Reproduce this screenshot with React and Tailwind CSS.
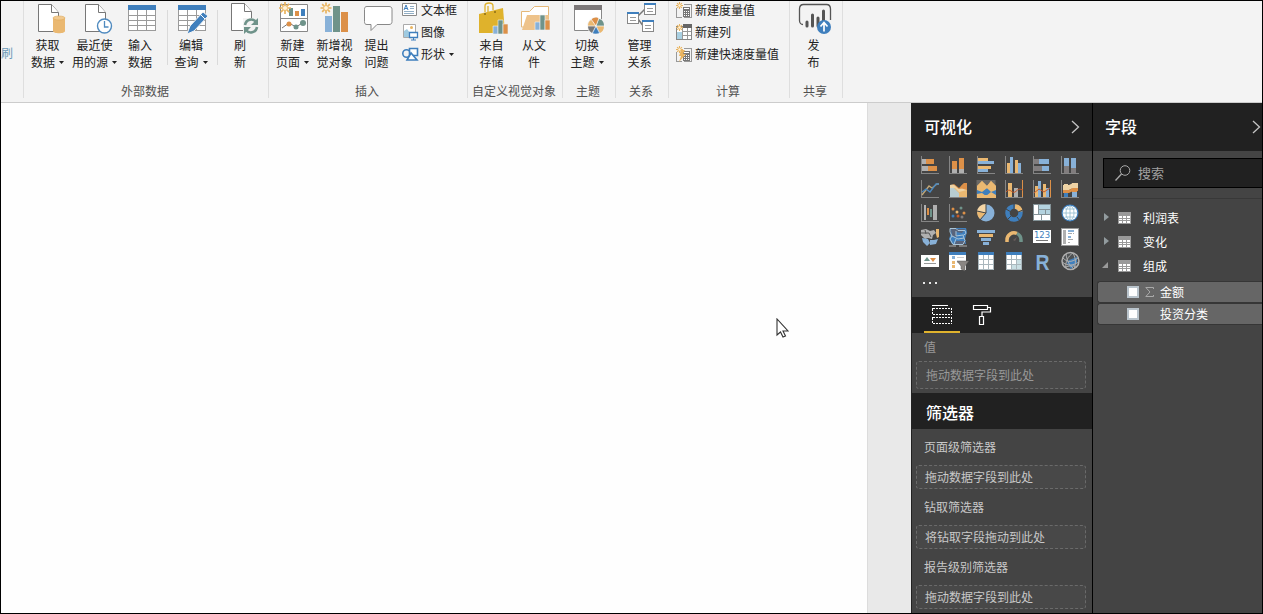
import React from "react";

const Art = ({ x, y, w, h, children }) => (
  <svg className="block shrink-0" width={w} height={h} viewBox={`${x} ${y} ${w} ${h}`} fill="none">
    {children}
  </svg>
);

const Caret = () => (
  <svg className="mb-[2px] ml-1 inline-block align-middle" width="5" height="3" viewBox="0 0 5 3">
    <path d="M0 0h5L2.5 3z" fill="#222" />
  </svg>
);

const Button = ({ x, w, lines, caret, children }) => (
  <div className="flex shrink-0 flex-col items-center">
    <Art x={x} y={1} w={w} h={36}>{children}</Art>
    <div className="-mt-px pr-[2px] text-center leading-[17px] whitespace-nowrap">
      <div>{lines[0]}</div>
      <div>{lines[1]}{caret && <Caret />}</div>
    </div>
  </div>
);

const Small = ({ x, y, text, caret, children }) => (
  <div className="flex h-[22px] shrink-0 items-center whitespace-nowrap">
    <Art x={x} y={y} w={18} h={22}>{children}</Art>
    <span className="pb-px pl-px leading-[18px]">{text}{caret && <Caret />}</span>
  </div>
);

const Group = ({ className, label, children }) => (
  <div className={"flex h-[97px] shrink-0 flex-col border-r border-[#dedede] " + className}>
    <div className="flex h-[81px] shrink-0 items-start overflow-hidden">{children}</div>
    <div className="pr-[2px] text-center leading-[18px] whitespace-nowrap text-[#505050]">{label}</div>
  </div>
);

const Spark = ({ x, y, r = 6 }) => (
  <g stroke="#e9b45f" strokeWidth={r > 5 ? 1.7 : 1.1}>
    <path d={`M${x - r} ${y}h${2 * r}M${x} ${y - r}v${2 * r}M${x - r * 0.7} ${y - r * 0.7}l${r * 1.4} ${r * 1.4}M${x - r * 0.7} ${y + r * 0.7}l${r * 1.4} ${-r * 1.4}`} />
    <circle cx={x} cy={y} r={r * 0.35} fill="#fff3dc" stroke="none" />
  </g>
);

const Page = ({ x, y = 4.5 }) => (
  <g stroke="#777" fill="#fff">
    <path d={`M${x} ${y}h13l7 8v19h-20z`} />
    <path d={`M${x + 13} ${y}v8h7`} />
  </g>
);

const Sheet = ({ x }) => (
  <g shapeRendering="crispEdges">
    <rect x={x} y="5" width="28" height="25" fill="#fff" />
    <path d={`M${x + .5} 10v20h27v-20M${x} 15.5h28M${x} 20.5h28M${x} 25.5h28M${x + 9.5} 10v20M${x + 18.5} 10v20`} stroke="#9a9a9a" />
    <rect x={x} y="5" width="28" height="5" fill="#3f7fbd" />
  </g>
);

const Calc = ({ y }) => (
  <g shapeRendering="crispEdges">
    <path d={`M676.5 ${y + 7}v9.5h5M684 ${y + 3.5}h7.500v13h-8`} stroke="#999" />
    <rect x="683" y={y + 6} width="7" height="10" fill="#777" />
    <path d={`M684 ${y + 7.5}h5M684 ${y + 10.5}h1M686 ${y + 10.5}h1M688 ${y + 10.5}h1M684 ${y + 12.5}h1M686 ${y + 12.5}h1M688 ${y + 12.5}h1M684 ${y + 14.5}h1M686 ${y + 14.5}h1M688 ${y + 14.5}h1`} stroke="#fff" />
  </g>
);

const Ribbon = () => (
  <div className="flex h-[102px] shrink-0 overflow-hidden border-b border-[#cccccc] bg-[#f3f3f3] text-[12px] text-[#222]">
    <div className="h-[97px] w-[23px] shrink-0 border-r border-[#dedede] pt-[43px] leading-[18px] text-[#6b99b7]">刷</div>
    <Group className="w-[245px]" label="外部数据">
      <div className="flex pl-px">
        <Button x={25} w={47} lines={["获取", "数据"]} caret>
          <Page x={38.5} />
          <path d="M53 18v13c0 3 12 3 12 0V18z" fill="#eab871" />
          <ellipse cx="59" cy="18" rx="6" ry="2" fill="#f1c98f" stroke="#dda758" strokeWidth=".6" />
        </Button>
        <Button x={72} w={46} lines={["最近使", "用的源"]} caret>
          <Page x={84.5} />
          <circle cx="103.500" cy="26" r="7" fill="#fff" stroke="#4f8abf" strokeWidth="1.400" />
          <path d="M103.500 21v6h4" stroke="#4f8abf" strokeWidth="1.300" />
        </Button>
        <Button x={118} w={44} lines={["输入", "数据"]}><Sheet x={127} /></Button>
        <div className="mt-[9px] mr-px ml-1 h-[55px] w-px bg-[#dadada]" />
        <Button x={168} w={46} lines={["编辑", "查询"]} caret>
          <Sheet x={177} />
          <path d="M186 34l3-8 13-14 5 4-14 15z" fill="#3f7fbd" stroke="#f3f3f3" />
          <path d="M199 14l5 5" stroke="#fff" />
        </Button>
        <div className="mt-[9px] mr-px ml-[2px] h-[55px] w-px bg-[#dadada]" />
        <Button x={218} w={44} lines={["刷", "新"]}>
          <Page x={230.5} y={3.5} />
          <rect x="242" y="18" width="16" height="16" fill="#f3f3f3" />
          <path d="M244 25c1-6 8-7 11-3M256 27c-1 6-8 7-11 3" stroke="#6f938a" strokeWidth="2.600" />
          <path d="M257 18v7h-7zM243 34v-7h7z" fill="#6f938a" />
        </Button>
      </div>
    </Group>
    <Group className="w-[199px]" label="插入">
      <div className="flex pl-[3px]">
        <Button x={272} w={43} lines={["新建", "页面"]} caret>
          <path d="M280.500 4.500h27v27h-27zM280 18.500h28" fill="#fff" stroke="#888" />
          <g shapeRendering="crispEdges"><rect x="289" y="8" width="4" height="8" fill="#6f938a" /><rect x="295" y="11" width="4" height="5" fill="#dc9048" /><rect x="301" y="9" width="4" height="7" fill="#3f7fbd" /></g>
          <path d="M282 28l7-5 7 4 8-5" stroke="#777" />
          <circle cx="289" cy="24" r="2.500" fill="#dc9048" /><circle cx="296" cy="27" r="2.500" fill="#6f938a" /><circle cx="303" cy="23" r="3" fill="#6f938a" />
          <Spark x={285} y={8} />
        </Button>
        <Button x={315} w={41} lines={["新增视", "觉对象"]}>
          <path d="M325 16h7v16h-7z" fill="#88b1d8" /><path d="M333 6h7v26h-7z" fill="#6f938a" /><path d="M341 12h7v20h-7z" fill="#dc9048" />
          <Spark x={326} y={8} r={5.500} />
        </Button>
        <Button x={356} w={43} lines={["提出", "问题"]}>
          <path d="M367 6.500h22c2 0 3 1 3 3v12c0 2-1 3-3 3h-12l-6 6v-6h-4c-2 0-2.500-1-2.500-3v-12c0-2 .5-3 2.500-3z" fill="#fff" stroke="#888" />
        </Button>
        <div className="-mt-[2px] flex flex-col pl-[3px]">
          <Small x={402} y={-1} text="文本框">
            <path d="M402.500 3.500h14v12h-14z" fill="#fff" stroke="#8a8a8a" />
            <path d="M404 10l2-5 2 5M404.800 8.500h2.500" stroke="#3f7fbd" /><path d="M410 6.500h4M410 8.500h4M404 11.500h10M404 13.500h10" stroke="#91aec5" />
          </Small>
          <Small x={402} y={21} text="图像">
            <path d="M403.500 24.500h12v13h-12z" fill="#fff" stroke="#aaa" />
            <path d="M404 37v-6l3-2 3 4v4z" fill="#9fcae0" /><circle cx="411.500" cy="27.500" r="1.500" fill="#e9b45f" />
            <path d="M409.500 32.500h8v5h-8z" fill="#fff" stroke="#3f7fbd" strokeWidth="1.300" /><path d="M413.500 38v2M411 40h5" stroke="#3f7fbd" />
          </Small>
          <Small x={402} y={43} text="形状" caret>
            <circle cx="406.500" cy="53.500" r="3.700" stroke="#3f7fbd" strokeWidth="1.600" />
            <path d="M409.500 48.500h8v7h-8z" fill="#fff" stroke="#3f7fbd" strokeWidth="1.600" /><path d="M407 60l4-7 6 7z" fill="#fff" stroke="#3f7fbd" strokeWidth="1.600" />
          </Small>
        </div>
      </div>
    </Group>
    <Group className="w-[95px]" label="自定义视觉对象">
      <div className="flex pl-[3px]">
        <Button x={471} w={43} lines={["来自", "存储"]}>
          <path d="M485 12V6c0-4 8-4 8 0v4M488 12V6" stroke="#dfb22c" strokeWidth="1.300" />
          <path d="M479 14l24-6 2 25h-26z" fill="#dfb22c" />
          <circle cx="485" cy="14" r="1" fill="#8b6d16" /><circle cx="495" cy="12" r="1" fill="#8b6d16" />
          <path d="M493 26h5v8h-5z" fill="#88b1d8" stroke="#f3f3f3" strokeWidth=".6" /><path d="M498 20h5v14h-5z" fill="#6f938a" stroke="#f3f3f3" strokeWidth=".6" /><path d="M503 24h5v10h-5z" fill="#dc9048" stroke="#f3f3f3" strokeWidth=".6" />
        </Button>
        <Button x={514} w={42} lines={["从文", "件"]}>
          <path d="M521.500 27V11.500h8l5-5h14V27z" fill="#fff" stroke="#e5b879" />
          <path d="M522 30l5-15h22l-2 15z" fill="#eec38b" />
          <path d="M535 22h5v8h-5z" fill="#88b1d8" stroke="#f3f3f3" strokeWidth=".6" /><path d="M540 15h5v15h-5z" fill="#6f938a" stroke="#f3f3f3" strokeWidth=".6" /><path d="M545 20h5v10h-5z" fill="#dc9048" stroke="#f3f3f3" strokeWidth=".6" />
        </Button>
      </div>
    </Group>
    <Group className="w-[53px]" label="主题">
      <Button x={563} w={50} lines={["切换", "主题"]} caret>
        <path d="M574.500 5.500h27v25h-27z" fill="#fff" stroke="#888" /><path d="M574 5h28v5h-28z" fill="#7c7879" />
        <circle cx="596" cy="26" r="9" fill="#f3f3f3" />
        <path d="M596 26l-5-6c3-3 6-3 8-1z" fill="#dc9048" /><path d="M596 26l3-7c4 1 5 4 5 7z" fill="#6f938a" /><path d="M596 26h8c0 4-2 6-4 7z" fill="#eab871" /><path d="M596 26l4 7c-3 1-6 1-8 0z" fill="#3f7fbd" /><path d="M596 26l-4 7c-3-2-4-4-4-7z" fill="#777" /><path d="M596 26h-8c0-3 1-5 3-6z" fill="#eab871" />
        <path d="M596 26l-5-7M596 26l3-8M596 26h9M596 26l4 8M596 26l-4 8M596 26h-9" stroke="#fff" strokeWidth=".7" />
      </Button>
    </Group>
    <Group className="w-[53px]" label="关系">
      <Button x={616} w={49} lines={["管理", "关系"]}>
        <path d="M638 16l8-8M638 19l6 8" stroke="#777" strokeWidth="1.500" />
        {[[627, 12], [644, 3], [642, 20]].map(([a, b]) => (
          <g key={a} shapeRendering="crispEdges"><path d={`M${a + .5} ${b + .5}h11v11h-11z`} fill="#fff" stroke="#888" /><path d={`M${a} ${b}h12v2h-12z`} fill="#3f7fbd" /><path d={`M${a + 3} ${b + 5.5}h6M${a + 3} ${b + 8.5}h6`} stroke="#999" /></g>
        ))}
      </Button>
    </Group>
    <Group className="w-[121px]" label="计算">
      <div className="-mt-[2px] flex flex-col pl-[7px]">
        <Small x={676} y={-1} text="新建度量值"><Calc y={1} /><Spark x={679.500} y={5.500} r={3.500} /></Small>
        <Small x={676} y={21} text="新建列">
          <g shapeRendering="crispEdges"><path d="M676.500 26.500h15v13h-15z" fill="#fff" stroke="#888" /><path d="M677 32h5v7h-5z" fill="#a9d0e2" /><path d="M683 24h9v4h-9z" fill="#666" /><path d="M682.500 28v11M687.500 28v11M682 31.500h9M682 35.500h9" stroke="#999" /></g>
          <Spark x={679.500} y={27.500} r={3.500} />
        </Small>
        <Small x={676} y={43} text="新建快速度量值"><Calc y={45} /><path d="M681 50l4 0-2 4h3l-7 8 2-6h-2z" fill="#e9b45f" /><Spark x={679.500} y={49.500} r={3.500} /></Small>
      </div>
    </Group>
    <Group className="w-[53px]" label="共享">
      <Button x={790} w={49} lines={["发", "布"]}>
        <path d="M803 24.500c-2 0-3.500-2-3.500-4V9c0-3 1-4.500 4-4.500h23c3 0 4 1.500 4 4.500v11" fill="none" stroke="#555" strokeWidth="1.300" />
        <path d="M807 22v4M812.500 15v11M818 18v8M823.500 11v10" stroke="#555" strokeWidth="3" strokeLinecap="round" />
        <circle cx="824" cy="27" r="7" fill="#3f7fbd" /><path d="M824 31.500V23M820.500 26.500l3.500-4 3.500 4" stroke="#fff" strokeWidth="1.700" />
      </Button>
    </Group>
  </div>
);

const O = "#dc9048", Y = "#eab871", B = "#88b1d8", D = "#3f7fbd", G = "#b0b0b0", S = "#817d7e", T = "#6f938a";
const Bars = ({ list, axis = true }) => (
  <g shapeRendering="crispEdges">
    {list.map(([c, x, y, w, h], i) => <rect key={i} x={x} y={y} width={w} height={h} fill={c} />)}
    {axis && <path d="M.5 0v17.500H18" stroke="#858585" />}
  </g>
);
const Axis = () => <path d="M.5 0v17.500H18" stroke="#858585" shapeRendering="crispEdges" />;
const Grid = ({ tint }) => (
  <g shapeRendering="crispEdges">
    <path d="M1 1h16v17H1z" fill="#fff" />{tint && <path d="M12 8h5v9h-5zM7 13h5v4H7z" fill="#c9dfe4" />}
    <path d="M1.500 3v14.500h15V3M1 7.500h16M1 12.500h16M6.500 3v14M11.500 3v14" stroke="#aab7bd" /><path d="M1 0h16v3H1z" fill={D} />
  </g>
);

const charts = [
  <Bars list={[[G, 1, 3, 4, 5], [O, 5, 3, 8, 5], [G, 1, 10, 6, 5], [O, 7, 10, 9, 5]]} />,
  <Bars list={[[O, 3, 5, 5, 8], [G, 3, 13, 5, 4], [O, 10, 2, 5, 11], [G, 10, 13, 5, 4]]} />,
  <Bars list={[[Y, 1, 2, 10, 3], [B, 1, 5, 16, 3], [Y, 1, 10, 13, 3], [B, 1, 13, 10, 3]]} />,
  <Bars list={[[Y, 2, 7, 3, 10], [B, 5, 1, 3, 16], [Y, 10, 4, 3, 13], [B, 13, 7, 3, 10]]} />,
  <Bars list={[[S, 1, 3, 5, 5], [B, 6, 3, 10, 5], [S, 1, 10, 8, 5], [B, 9, 10, 7, 5]]} />,
  <Bars list={[[B, 3, 2, 5, 8], [S, 3, 10, 5, 7], [B, 10, 2, 5, 10], [S, 10, 12, 5, 5]]} />,
  <g><Axis /><path d="M1 15L8 6l3 2 5-4h2" stroke="#c2a878" strokeWidth="1.300" /><path d="M1 12l4-3 4 3 6-8h3" stroke="#4a88c0" strokeWidth="1.300" /></g>,
  <g><path d="M1 17V6l4-2 5 4 5-5h3v14z" fill={O} /><path d="M1 17V5c4-2 6 2 9 4 3 0 5-3 8-3v11z" fill="#eed3a5" /><path d="M1 17V9l5-1 4 4 8-2v7z" fill={Y} /><path d="M1 17V8l4 0 5 5v4z" fill="#afd0e2" opacity=".85" /><path d="M11 8c2-4 4-5 7-5v7z" fill={O} /><path d="M0 17.500h18" stroke="#858585" /></g>,
  <g><path d="M-.5 0v18h19V0" fill="#6a6865" /><path d="M0 18V6l5-5 5 5 4-5 5 5v12z" fill={Y} /><path d="M0 15V9l5 2 5-3 4 3 5-3v7z" fill={D} /><path d="M0 10V6l5-5 5 5 4-5 5 5v4l-5 2-4-4-5 4z" fill={Y} /><path d="M0 18v-4l5-1 4 3 5-4 5 3v3z" fill={Y} /></g>,
  <g><Bars list={[[Y, 3, 3, 4, 14], [G, 9, 8, 4, 9], [O, 17, 0, 1, 17]]} /><path d="M1 12c4-5 6 2 9 0s3-4 8-2" stroke="#c65b29" /></g>,
  <g><Bars list={[[Y, 2, 6, 3, 11], [B, 5, 1, 3, 16], [Y, 10, 4, 3, 13], [B, 13, 8, 3, 9], [O, 17, 0, 1, 17]]} /><path d="M1 13l5-4 5 3 6-4" stroke="#c65b29" /></g>,
  <g><Bars list={[["#eed3a5", 3, 4, 4, 4], [Y, 3, 8, 4, 4], [D, 3, 13, 4, 4], ["#eed3a5", 11, 3, 5, 4], [O, 11, 8, 5, 4], [B, 11, 12, 5, 5]]} /><path d="M2 5h6l4-2h5v5h-5l-4 2H2z" fill="#eed3a5" /><path d="M2 10h6l4-2h5v3h-5l-4 2H2z" fill={O} /></g>,
  <Bars list={[[G, 3, 1, 2, 15], [O, 6, 4, 2, 7], [T, 9, 5, 2, 8], [G, 12, 1, 4, 15]]} />,
  <g><Axis />{[[4, 5, O], [12, 4, T], [8, 8, Y], [15, 9, O], [4, 12, D], [9, 12, "#c65b29"], [13, 13, S]].map(([x, y, c]) => <circle key={x + "-" + y} cx={x} cy={y} r="1.500" fill={c} />)}</g>,
  <g><circle cx="9" cy="9" r="8.500" fill={B} /><path d="M9 9V0C4 0 1 3 0 7z" fill="#f4d5a5" /><path d="M9 9L0 7c0 4 1 6 3 8z" fill={Y} /><path d="M9 0v9l-9-2M9 9l-6 7" stroke="#444" /></g>,
  <g><circle cx="9" cy="9" r="6.500" stroke={D} strokeWidth="4.500" /><path d="M10 2.500c3 .3 5 2 5.500 5" stroke={Y} strokeWidth="4.500" /><path d="M9 0v5M1 5l5 3M2 16l4-4M12 13l3 4M13 8l5-2" stroke="#444" /></g>,
  <g shapeRendering="crispEdges"><path d="M0 0h18v17H0z" fill="#fff" /><path d="M6 1h11v9H6z" fill="#b4d3df" /><path d="M.5 .5h17v16H.5zM5.500 1v9M0 10.500h18M8.500 10v7M12.500 5v5M6 5.500h11" stroke="#849398" /></g>,
  <g><circle cx="9" cy="9" r="8.500" fill={D} /><circle cx="9" cy="9" r="7.300" fill="#fff" /><path d="M9 2v14M2 9h14M4 5h10M4 13h10" stroke="#8fbace" strokeWidth=".8" /><ellipse cx="9" cy="9" rx="4" ry="7" stroke="#8fbace" strokeWidth=".8" /></g>,
  <g><path d="M0 2l5-1 4 2 4-1 2 3-3 2-1 4-4-1-3 1-4-4z" fill={G} /><path d="M15 1h3v8l-2 1-1-4z" fill={Y} /><path d="M1 10l6 1 2 4-3 3-4-4zM9 12l4 0 4-1-2 5-6 1z" fill={B} /><path d="M0 5h8l2 4M4 2l1 4" stroke="#555" /></g>,
  <g><path d="M1 0h16l1 4-2 7 1 5H3L0 11l2-6z" fill={D} /><path d="M2 1h14l-3 4-6-1 1 5-5-1zM7 13h9v3H6z" fill="#59647b" /><path d="M1 .5h6l2 2h7l1 3-3 2 2 5-2 4H4L1 11l2-3-2-4zM7 3v5l7-1M3 8l6 3 6-1M7 11l-2 5" stroke="#a9c4d7" /><path d="M0 18h7M10 18h8" stroke={G} /></g>,
  <Bars axis={false} list={[[B, 0, 2, 18, 3], [Y, 2, 6, 14, 3], [B, 4, 10, 10, 3], [B, 6, 14, 6, 3]]} />,
  <g><path d="M2 14v-2a7 7 0 0 1 10-6.500" stroke={Y} strokeWidth="3.500" /><path d="M12 5.500a7 7 0 0 1 4 6.500v2" stroke={T} strokeWidth="3.500" /><path d="M8 12l4-3-2 4z" fill="#695d5b" /></g>,
  <g><path d="M0 2h18v13H0z" fill="#fff" /><text x="9" y="10" textAnchor="middle" fill={D} fontSize="8.500" fontFamily="DejaVu Sans">123</text><path d="M3 12.500h12" stroke="#777" /></g>,
  <g shapeRendering="crispEdges"><path d="M.5 .5h17v17H.5z" fill="#fff" stroke="#999" /><path d="M2 2h3v14H2z" fill={G} /><path d="M7 2h6v2H7zM7 8h3v2H7z" fill={B} /><path d="M12 5h1M7 5.500h4M7 11.500h5M7 14.500h2" stroke="#aaa" /></g>,
  <g><path d="M0 3h18v12H0z" fill="#fff" /><path d="M3 9l3-4 3 4z" fill={T} /><path d="M9 6h6l-3 4z" fill={O} /><path d="M3 11.500h12" stroke="#999" /></g>,
  <g><path d="M0 0h17v18H0z" fill="#fff" /><path d="M0 0h17v3H0z" fill={D} /><path d="M3 4h3v3H3z" fill={B} /><path d="M3 9h3v3H3zM3 13h3v3H3z" fill={Y} /><path d="M8 5.500h7M8 10.500h3" stroke="#ccc" /><path d="M8 9h12l-4 5v5l-4-2v-3z" fill="#8a8683" stroke="#555" strokeWidth=".5" /></g>,
  <Grid />,
  <Grid tint />,
  <text x="9.500" y="17.500" textAnchor="middle" fill={B} fontSize="22" fontWeight="700" fontFamily="Liberation Sans" textLength="14" lengthAdjust="spacingAndGlyphs">R</text>,
  <g><circle cx="9.500" cy="9" r="8.500" fill="#4f5254" stroke={G} strokeWidth="1.500" /><path d="M8 8l8-3v6l-6 6-4-6z" fill={D} /><path d="M2 6c5 5 9 4 15 0M1 10c6 4 10 4 17 0M4 15c4-1 8-2 12 0M5 2c1 6 2 10 8 15M12 1c3 6 3 10 1 16M5 16c-1-6 2-12 7-15" stroke={G} /></g>,
];

const Drop = ({ className = "", children }) => (
  <div className={"mx-1 flex shrink-0 items-center rounded-[3px] border border-dashed border-[#6a6a6a] bg-[#484848] whitespace-nowrap " + className}>{children}</div>
);

const FilterSection = ({ title, hint }) => (
  <>
    <div className="h-9 shrink-0 pl-3 leading-9">{title}</div>
    <Drop className="mr-[6px] h-6 pl-[8px]">{hint}</Drop>
  </>
);

const Chevron = () => (
  <svg width="10" height="14" viewBox="0 0 10 14" fill="none"><path d="M1 1l6.500 6L1 13" stroke="#c4c4c4" strokeWidth="1.300" /></svg>
);

const Visualizations = () => (
  <div className="flex w-[182px] shrink-0 flex-col overflow-hidden border-r border-l border-r-black border-l-[#222] bg-[#444] text-[12px] text-[#c8c8c8]">
    <div className="flex h-12 shrink-0 items-center justify-between bg-[#212121] pr-[11px] pl-3 text-[16px] font-medium text-white"><span className="pb-[3px]">可视化</span><Chevron /></div>
    <div className="grid shrink-0 grid-cols-[repeat(6,28px)] px-1 pt-[2px]">
      {charts.map((c, i) => <svg key={i} className="overflow-visible" width="28" height="24" viewBox="-5 -3 28 24" fill="none">{c}</svg>)}
    </div>
    <div className="flex h-6 shrink-0 items-center gap-1 pb-[5px] pl-[11px]">
      {[0, 1, 2].map((i) => <span key={i} className="h-[2px] w-[2px] bg-[#e8e8e8]" />)}
    </div>
    <div className="flex h-9 shrink-0 bg-[#212121] pl-3">
      <div className="flex h-9 w-9 justify-center border-b-2 border-[#e0b32d]">
        <Art x={924} y={297} w={36} h={34}><path d="M932 305.500h16" stroke="#fff" /><path d="M932.500 308.500h19v6h-19zM932.500 317.500h19v6h-19z" stroke="#fff" strokeDasharray="2 1" shapeRendering="crispEdges" /></Art>
      </div>
      <Art x={960} y={297} w={40} h={36}><path d="M973.500 305.500h14v4h-14zM988 307.500h2.500v4.500h-8.500v4M979.500 316.500h4v8h-4z" stroke="#fff" strokeWidth="1.200" /></Art>
    </div>
    <div className="h-7 shrink-0 pl-3 leading-[28px] text-[#999]">值</div>
    <Drop className="mr-[6px] h-7 pl-[9px] text-[#999]">拖动数据字段到此处</Drop>
    <div className="mt-1 h-9 shrink-0 bg-[#212121] pl-[14px] text-[16px] leading-[38px] font-medium text-white">筛选器</div>
    <FilterSection title="页面级筛选器" hint="拖动数据字段到此处" />
    <FilterSection title="钻取筛选器" hint="将钻取字段拖动到此处" />
    <FilterSection title="报告级别筛选器" hint="拖动数据字段到此处" />
  </div>
);

const TableRow = ({ name, open }) => (
  <div className="flex h-6 items-center">
    <Art x={0} y={0} w={25} h={24}>
      {open ? <path d="M15 8v6H9z" fill="#999" /> : <path d="M11 7l5 4-5 4z" fill="#929b9e" />}
    </Art>
    <svg width="13" height="12" viewBox="0 0 13 12" shapeRendering="crispEdges"><path d="M0 0h13v12H0z" fill="#999" /><path d="M1 4h3v2H1zM5 4h3v2H5zM9 4h3v2H9zM1 7h3v1H1zM5 7h3v1H5zM9 7h3v1H9zM1 9h3v2H1zM5 9h3v2H5zM9 9h3v2H9z" fill="#fff" /></svg>
    <span className="pl-3">{name}</span>
  </div>
);

const FieldRow = ({ name, sigma }) => (
  <div className="flex h-[22px] items-center rounded-l-[3px] border border-r-0 border-[#363636] bg-[#666] pl-[29px]">
    <span className="h-3 w-3 border-2 border-[#b9c4cc] bg-white" />
    <span className="flex w-[21px] justify-center">
      {sigma && <svg width="9" height="10" viewBox="0 0 9 10" fill="none"><path d="M8.500 2V.500H.800L5 5 .800 9.500h7.700V8" stroke="#aaa" /></svg>}
    </span>
    <span>{name}</span>
  </div>
);

const Fields = () => (
  <div className="flex min-w-0 flex-1 flex-col overflow-hidden bg-[#444] text-[12px] text-white">
    <div className="flex h-12 shrink-0 items-center justify-between bg-[#212121] pl-3 text-[16px] font-medium"><span className="pb-[3px]">字段</span><Chevron /></div>
    <div className="flex h-[48px] shrink-0 items-start border-b border-[#383838] pt-[7px] pl-[10px]">
      <div className="flex h-[30px] flex-1 items-center border border-r-0 border-black bg-[#212121] pl-[11px] text-[13px] text-[#a0a0a0]">
        <svg width="16" height="16" viewBox="0 0 16 16" fill="none"><circle cx="10" cy="5.500" r="4.800" stroke="#aaa" /><path d="M6.500 9L.5 15.500" stroke="#aaa" strokeWidth="1.300" /></svg>
        <span className="pb-px pl-[7px]">搜索</span>
      </div>
    </div>
    <div className="flex flex-col pt-[7px]">
      <TableRow name="利润表" />
      <TableRow name="变化" />
      <TableRow name="组成" open />
    </div>
    <div className="flex flex-col pt-[3px] pl-1">
      <FieldRow name="金额" sigma />
      <FieldRow name="投资分类" />
    </div>
  </div>
);

export default function App() {
  return (
    <div className="relative flex h-[614px] w-[1263px] flex-col overflow-hidden border border-black bg-[#e9e9e9] font-['Noto_Sans_CJK_SC',sans-serif]">
      <Ribbon />
      <div className="flex min-h-0 flex-1">
        <div className="w-[867px] shrink-0 border-r border-[#dcdcdc] bg-[#fefefe]" />
        <div className="w-[43px] shrink-0 bg-[#e9e9e9]" />
        <Visualizations />
        <Fields />
      </div>
      <svg className="absolute top-[317px] left-[775px]" width="13" height="21" viewBox="0 0 13 21"><path d="M1 1v16l3.500-3 2.500 5 2.500-1-2.500-5h5z" fill="#fff" stroke="#333" strokeWidth="1.100" /></svg>
    </div>
  );
}
